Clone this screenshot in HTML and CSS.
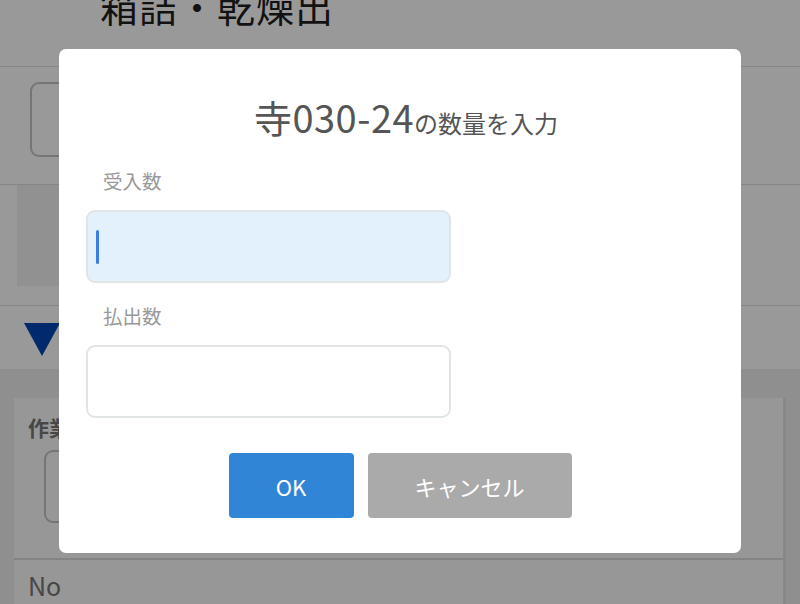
FILE: index.html
```
<!DOCTYPE html>
<html lang="ja">

<head>
  <meta charset="UTF-8" />
  <meta name="viewport" content="width=device-width, initial-scale=1.0" />
  <title>箱詰・乾燥出</title>
  <link rel="stylesheet" href="styles.css">
</head>

<body>
  <!-- Фоновая страница -->
  <div class="page">
    <header class="page-header">
      <h1>箱詰・乾燥出</h1>
    </header>

    <div class="row row-select">
      <div class="select-box"></div>
    </div>

    <div class="row row-image">
      <div class="image-box"></div>
    </div>

    <div class="row row-toggle">
      <span class="triangle"></span>
    </div>

    <div class="work-area">
      <div class="work-panel">
        <div class="work-head">
          <p class="work-label">作業</p>
          <div class="work-input"></div>
        </div>
        <div class="work-list">
          <p class="work-no">No</p>
        </div>
      </div>
    </div>
  </div>

  <!-- Модальное окно ввода количества -->
  <div class="overlay">
    <div class="dialog">
      <h2 class="dialog-title"><span class="code">寺030-24</span>の数量を入力</h2>

      <label class="field-label">受入数</label>
      <div class="field field-active"><span class="caret"></span></div>

      <label class="field-label">払出数</label>
      <div class="field"></div>

      <div class="dialog-buttons">
        <button class="btn btn-ok">OK</button>
        <button class="btn btn-cancel">キャンセル</button>
      </div>
    </div>
  </div>
</body>

</html>
```

FILE: styles.css
```
html,
body {
  margin: 0;
  height: 100%;
  overflow: hidden;
}

body {
  background: #ffffff;
  font-family: "Noto Sans CJK JP", "Noto Sans", sans-serif;
  color: #222;
}

/* Фоновая страница */
.page {
  width: 800px;
  height: 604px;
  overflow: hidden;
}

.page-header {
  height: 66px;
  border-bottom: 1px solid #dedede;
  padding-left: 100px;
  overflow: hidden;
}

.page-header h1 {
  margin: -22px 0 0;
  font-size: 38px;
  font-weight: normal;
  letter-spacing: 1px;
  color: #1e1e1e;
}

.row {
  border-bottom: 1px solid #dedede;
}

.row-select {
  height: 118px;
  padding: 15px 0 0 30px;
  box-sizing: border-box;
}

.select-box {
  width: 260px;
  height: 75px;
  border: 2px solid #c4c4c4;
  border-radius: 9px;
  box-sizing: border-box;
}

.row-image {
  height: 120px;
  padding-left: 17px;
}

.image-box {
  width: 300px;
  height: 101px;
  background: #f2f2f2;
}

.row-toggle {
  height: 63px;
  border-bottom: none;
  padding: 17px 0 0 24px;
  box-sizing: border-box;
}

.triangle {
  display: block;
  width: 0;
  height: 0;
  border-left: 18px solid transparent;
  border-right: 18px solid transparent;
  border-top: 33px solid #0046b4;
}

.work-area {
  background: #eeeeee;
  padding: 29px 14px 0 14px;
  height: 300px;
}

.work-panel {
  background: #fcfcfc;
  border-right: 3px solid #e3e3e3;
  height: 100%;
}

.work-head {
  height: 162px;
  padding: 14px 0 0 14px;
  box-sizing: border-box;
  border-bottom: 2px solid #dcdcdc;
}

.work-label {
  margin: 0 0 8px;
  font-size: 21px;
  font-weight: bold;
  color: #777;
}

.work-input {
  margin-left: 16px;
  width: 300px;
  height: 73px;
  border: 2px solid #c4c4c4;
  border-radius: 9px;
  box-sizing: border-box;
}

.work-no {
  margin: 8px 0 0 14px;
  font-size: 25px;
  line-height: 34px;
  color: #777;
}

/* Затемнение */
.overlay {
  position: fixed;
  top: 0;
  left: 0;
  width: 100%;
  height: 100%;
  background: rgba(0, 0, 0, 0.4);
  display: flex;
  justify-content: center;
  align-items: flex-start;
}

.dialog {
  margin-top: 49px;
  width: 682px;
  height: 504px;
  background: #ffffff;
  border-radius: 7px;
  padding: 0 27px;
  box-sizing: border-box;
}

.dialog-title {
  margin: 0;
  padding-top: 48px;
  padding-left: 12px;
  height: 118px;
  box-sizing: border-box;
  text-align: center;
  font-size: 24px;
  font-weight: normal;
  color: #555;
  line-height: 40px;
}

.dialog-title .code {
  font-size: 38px;
  letter-spacing: 0.5px;
}

.field-label {
  display: block;
  margin-left: 17px;
  font-size: 19.5px;
  color: #999;
  line-height: 26px;
  height: 43px;
  padding-top: 1px;
  box-sizing: border-box;
}

.field {
  width: 365px;
  height: 73px;
  border: 2px solid #e1e5e5;
  border-radius: 9px;
  box-sizing: border-box;
  margin-bottom: 19px;
  background: #ffffff;
  display: flex;
  align-items: center;
  padding-left: 8px;
}

.field-active {
  background: #e3f1fd;
}

.caret {
  width: 3px;
  height: 34px;
  border-radius: 2px;
  background: #3a7ee0;
}

.dialog-buttons {
  display: flex;
  justify-content: center;
  gap: 14px;
  margin-top: 35px;
}

.btn {
  height: 65px;
  border: none;
  border-radius: 4px;
  font-family: inherit;
  font-size: 22px;
  color: #ffffff;
  cursor: pointer;
}

.btn-ok {
  width: 125px;
  background: #3085d6;
}

.btn-cancel {
  width: 204px;
  background: #aaaaaa;
}
```
